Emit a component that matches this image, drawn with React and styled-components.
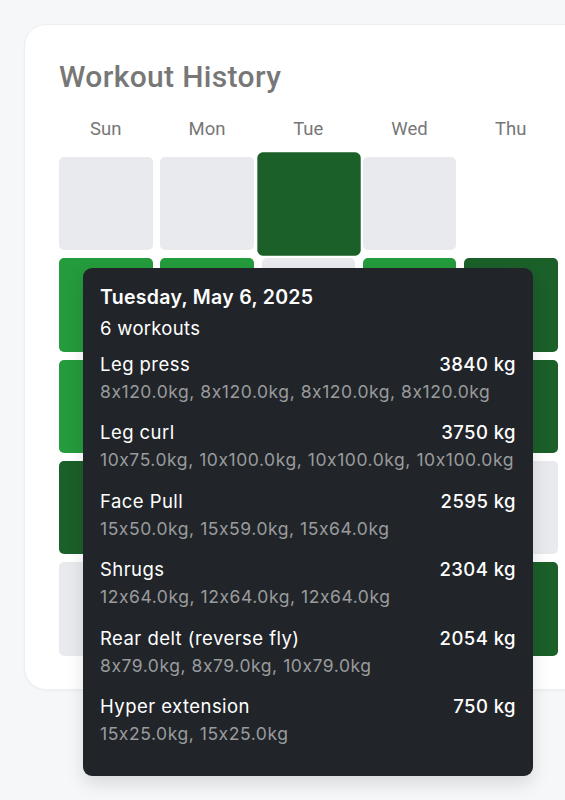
import React from "react";
import styled, { createGlobalStyle } from "styled-components";

const GlobalStyle = createGlobalStyle`
  html {
    overflow: hidden;
    background: #f5f7f9;
  }
  body {
    margin: 0;
    padding: 0;
    background: #f5f7f9;
    font-family: Roboto, "Liberation Sans", sans-serif;
  }
`;

const Page = styled.div`
  box-sizing: border-box;
  min-height: 100vh;
  padding: 24px;
  width: max-content;
`;

const Card = styled.section`
  position: relative;
  width: 702px;
  background: #ffffff;
  border: 1px solid #eceef1;
  border-radius: 22px;
  padding: 34px 34px 33px 34px;
  box-shadow: 0 1px 3px rgba(0, 0, 0, 0.03);
`;

const Title = styled.h2`
  margin: 0 0 22px 0;
  font-family: Roboto, "Liberation Sans", sans-serif;
  font-size: 30px;
  line-height: 36px;
  font-weight: 500;
  letter-spacing: 0.35px;
  color: #777777;
`;

const Grid = styled.div`
  display: grid;
  grid-template-columns: repeat(5, 93.5px);
  column-gap: 7.75px;
  row-gap: 7.8px;
`;

const DayLabel = styled.div`
  text-align: center;
  font-size: 18.5px;
  line-height: 24px;
  color: #777777;
  margin-bottom: 8.2px;
`;

const colors = {
  none: "#e9eaee",
  light: "#249b3c",
  dark: "#1b5f29",
  blank: "transparent",
};

const Cell = styled.div`
  height: 93.5px;
  border-radius: 5px;
  background: ${(p) => colors[p.$level]};
  transform: ${(p) => (p.$active ? "scale(1.1)" : "none")};
  position: relative;
  z-index: ${(p) => (p.$active ? 1 : 0)};
`;

const Tooltip = styled.div`
  position: absolute;
  left: 58px;
  top: 243px;
  width: 450px;
  box-sizing: border-box;
  padding: 16px 17px 15px 17px;
  background: #212529;
  border-radius: 9px;
  box-shadow: 0 8px 18px rgba(0, 0, 0, 0.12);
  color: #ffffff;
  font-family: Inter, "Noto Sans", sans-serif;
  font-feature-settings: "calt" 0;
  z-index: 5;
`;

const TipDate = styled.div`
  font-size: 19.5px;
  line-height: 27px;
  font-weight: 600;
  letter-spacing: 0.3px;
`;

const TipCount = styled.div`
  font-size: 18.5px;
  line-height: 27px;
  letter-spacing: 0.3px;
  margin-top: 4px;
  margin-bottom: 9px;
`;

const Entry = styled.div`
  margin-bottom: 15.4px;
`;

const EntryHead = styled.div`
  display: flex;
  justify-content: space-between;
  font-size: 18.5px;
  line-height: 27px;
  letter-spacing: 0.45px;
`;

const EntryName = styled.span`
  font-weight: 400;
`;

const EntryTotal = styled.span`
  font-weight: 500;
`;

const Sets = styled.div`
  margin-top: 2px;
  font-size: 17.5px;
  line-height: 24px;
  letter-spacing: 0.55px;
  color: #9a9b9d;
`;

const days = ["Sun", "Mon", "Tue", "Wed", "Thu"];

const weeks = [
  ["none", "none", "dark", "none", "blank"],
  ["light", "light", "none", "light", "dark"],
  ["light", "light", "none", "light", "dark"],
  ["dark", "none", "light", "none", "none"],
  ["none", "light", "none", "light", "dark"],
];

const entries = [
  { name: "Leg press", total: "3840 kg", sets: "8x120.0kg, 8x120.0kg, 8x120.0kg, 8x120.0kg" },
  { name: "Leg curl", total: "3750 kg", sets: "10x75.0kg, 10x100.0kg, 10x100.0kg, 10x100.0kg" },
  { name: "Face Pull", total: "2595 kg", sets: "15x50.0kg, 15x59.0kg, 15x64.0kg" },
  { name: "Shrugs", total: "2304 kg", sets: "12x64.0kg, 12x64.0kg, 12x64.0kg" },
  { name: "Rear delt (reverse fly)", total: "2054 kg", sets: "8x79.0kg, 8x79.0kg, 10x79.0kg" },
  { name: "Hyper extension", total: "750 kg", sets: "15x25.0kg, 15x25.0kg" },
];

export default function App() {
  return (
    <>
      <GlobalStyle />
      <Page>
        <Card>
          <Title>Workout History</Title>
          <Grid>
            {days.map((d) => (
              <DayLabel key={d}>{d}</DayLabel>
            ))}
            {weeks.map((week, wi) =>
              week.map((lvl, di) => (
                <Cell
                  key={`${wi}-${di}`}
                  $level={lvl}
                  $active={wi === 0 && di === 2}
                />
              ))
            )}
          </Grid>
          <Tooltip>
            <TipDate>Tuesday, May 6, 2025</TipDate>
            <TipCount>6 workouts</TipCount>
            {entries.map((e) => (
              <Entry key={e.name}>
                <EntryHead>
                  <EntryName>{e.name}</EntryName>
                  <EntryTotal>{e.total}</EntryTotal>
                </EntryHead>
                <Sets>{e.sets}</Sets>
              </Entry>
            ))}
          </Tooltip>
        </Card>
      </Page>
    </>
  );
}
